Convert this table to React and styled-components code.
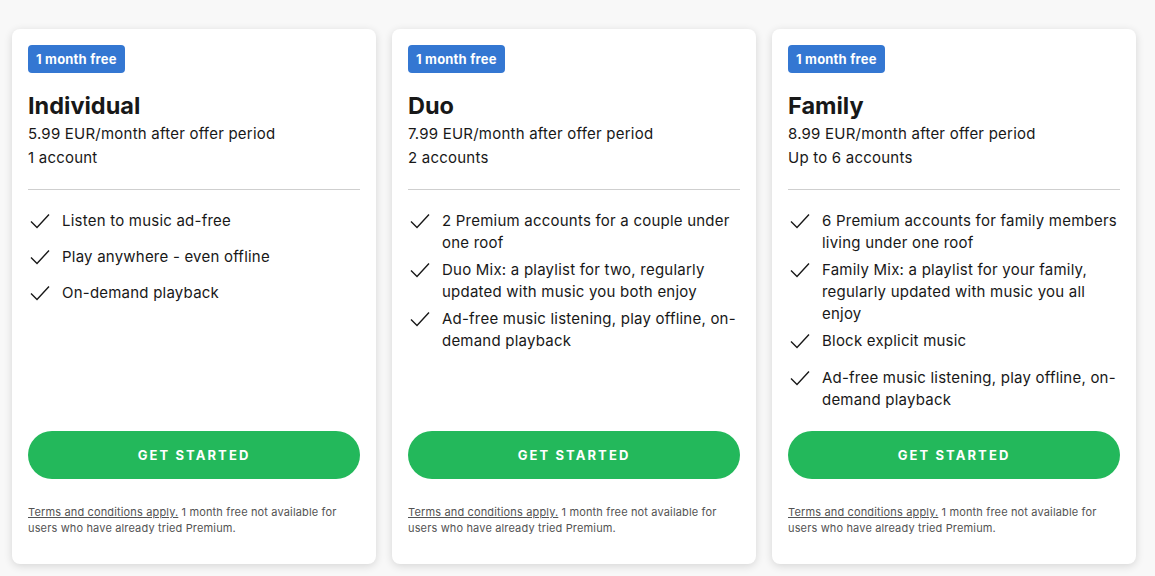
import React from "react";
import styled, { createGlobalStyle } from "styled-components";

const Global = createGlobalStyle`
  html, body { margin: 0; padding: 0; background: #f8f8f8; }
  body { font-family: Inter, "Noto Sans", sans-serif; color: #181818; -webkit-font-smoothing: antialiased; }
  * { box-sizing: border-box; }
`;

const Page = styled.div`
  display: grid;
  grid-template-columns: repeat(3, 364px);
  gap: 16px;
  padding: 29px 12px 12px 12px;
  width: 1155px;
  height: 576px;
`;

const Card = styled.div`
  background: #fff;
  border-radius: 8px;
  box-shadow: 0 2px 8px rgba(0, 0, 0, 0.14);
  padding: 16px 16px 28px;
  height: 535px;
  display: flex;
  flex-direction: column;
`;

const Badge = styled.span`
  align-self: flex-start;
  background: #3477d2;
  color: #fff;
  font-weight: 700;
  font-size: 13px;
  line-height: 28px;
  height: 28px;
  padding: 0 8px;
  border-radius: 4px;
  letter-spacing: 0.2px;
`;

const Title = styled.h2`
  margin: 17px 0 0;
  font-size: 23.5px;
  line-height: 32px;
  font-weight: 700;
  color: #181818;
  letter-spacing: 0;
`;

const Sub = styled.div`
  font-size: 15px;
  line-height: 24px;
  color: #181818;
  letter-spacing: 0.22px;
`;

const Divider = styled.hr`
  border: 0;
  border-top: 1px solid #cfcfcf;
  margin: 19px 0 20px;
  width: 100%;
`;

const Features = styled.ul`
  list-style: none;
  margin: 0;
  padding: 0;
  flex: 1;
  display: flex;
  flex-direction: column;
  gap: ${(p) => p.$gap}px;
`;

const Feature = styled.li`
  display: flex;
  gap: 12px;
  align-items: flex-start;
  font-size: 15px;
  line-height: 22px;
  color: #181818;
  letter-spacing: 0.22px;
  margin-top: ${(p) => p.$extra || 0}px;
  svg { flex: none; margin-top: 3px; margin-left: 2px; }
`;

const Button = styled.button`
  border: 0;
  background: #23b85b;
  color: #fff;
  height: 48px;
  border-radius: 24px;
  width: 100%;
  font-family: inherit;
  font-weight: 700;
  font-size: 13px;
  letter-spacing: 2.1px;
  text-transform: uppercase;
  cursor: pointer;
`;

const Terms = styled.p`
  margin: 25px 0 0;
  font-size: 11px;
  line-height: 16px;
  color: #535353;
  letter-spacing: 0.15px;
  a { color: #535353; text-decoration: underline; }
`;

const Check = () => (
  <svg width="20" height="16" viewBox="0 0 20 16" fill="none">
    <path d="M1 8.5 L7 14.5 L19 1.5" stroke="#181818" strokeWidth="1.4" />
  </svg>
);

const plans = [
  {
    name: "Individual",
    price: "5.99 EUR/month after offer period",
    accounts: "1 account",
    gap: 14,
    features: ["Listen to music ad-free", "Play anywhere - even offline", "On-demand playback"],
  },
  {
    name: "Duo",
    price: "7.99 EUR/month after offer period",
    accounts: "2 accounts",
    gap: 5,
    features: [
      "2 Premium accounts for a couple under one roof",
      "Duo Mix: a playlist for two, regularly updated with music you both enjoy",
      "Ad-free music listening, play offline, on-demand playback",
    ],
  },
  {
    name: "Family",
    price: "8.99 EUR/month after offer period",
    accounts: "Up to 6 accounts",
    gap: 5,
    extraLast: 10,
    features: [
      "6 Premium accounts for family members living under one roof",
      "Family Mix: a playlist for your family, regularly updated with music you all enjoy",
      "Block explicit music",
      "Ad-free music listening, play offline, on-demand playback",
    ],
  },
];

export default function App() {
  return (
    <>
      <Global />
      <Page>
        {plans.map((p) => (
          <Card key={p.name}>
            <Badge>1 month free</Badge>
            <Title>{p.name}</Title>
            <Sub>{p.price}</Sub>
            <Sub>{p.accounts}</Sub>
            <Divider />
            <Features $gap={p.gap}>
              {p.features.map((f, i) => (
                <Feature
                  key={f}
                  $extra={i === p.features.length - 1 ? p.extraLast : 0}
                >
                  <Check />
                  <span>{f}</span>
                </Feature>
              ))}
            </Features>
            <Button>Get started</Button>
            <Terms>
              <a href="#">Terms and conditions apply.</a> 1 month free not available for users who have already tried Premium.
            </Terms>
          </Card>
        ))}
      </Page>
    </>
  );
}
